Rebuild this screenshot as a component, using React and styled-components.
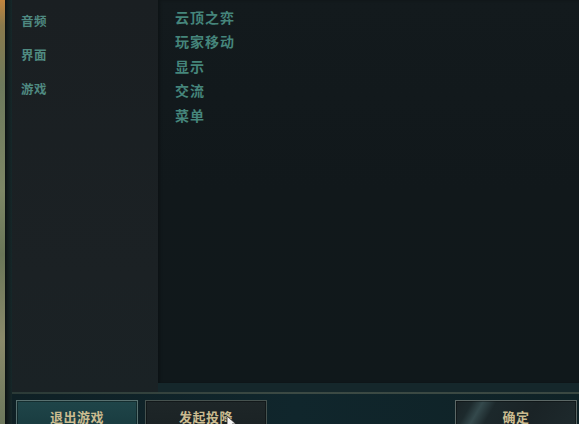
import React from "react";
import styled, { createGlobalStyle } from "styled-components";

const Global = createGlobalStyle`
  html, body { margin: 0; padding: 0; background: #0e1c1f; }
  body { width: 579px; height: 424px; overflow: hidden; font-family: "Noto Sans CJK SC", "Noto Sans", sans-serif; }
  #root { width: 579px; height: 424px; }
`;

const Frame = styled.div`
  position: relative;
  display: flex;
  width: 579px;
  height: 424px;
  overflow: hidden;
`;

const GameStrip = styled.div`
  width: 5px;
  flex: none;
  background: linear-gradient(180deg, #c2863e 0%, #8a7a4c 6%, #6d7a5c 20%, #7d8766 45%, #6a7658 60%, #8a8a6a 80%, #6d785c 100%);
`;

const Edge = styled.div`
  width: 7px;
  flex: none;
  background: linear-gradient(90deg, #0b1112 0%, #121c1d 40%, #16282a 100%);
`;

const Main = styled.div`
  flex: 1;
  display: flex;
  flex-direction: column;
  min-width: 0;
`;

const Content = styled.div`
  display: flex;
  height: 392px;
  flex: none;
  background: #15272b;
`;

const Sidebar = styled.nav`
  width: 146px;
  flex: none;
  display: flex;
  flex-direction: column;
  padding: 4px 0 0 9px;
  box-sizing: border-box;
  background: linear-gradient(180deg, #1a1f22 0%, #1b2124 70%, #1a2225 100%);
`;

const SideItem = styled.div`
  font-size: 12.5px;
  font-weight: 700;
  line-height: 34px;
  color: #4f8a81;
  letter-spacing: 0.4px;
`;

const PanelColumn = styled.div`
  flex: 1;
  display: flex;
  flex-direction: column;
  padding-bottom: 9px;
`;

const Panel = styled.section`
  flex: 1;
  display: flex;
  flex-direction: column;
  padding: 4.5px 0 0 17px;
  background: linear-gradient(180deg, #131a1d 0%, #11181b 50%, #10181b 100%);
  box-shadow: inset 2px 0 3px rgba(0, 0, 0, 0.25);
`;

const ListItem = styled.div`
  font-size: 14px;
  font-weight: 700;
  line-height: 24.5px;
  color: #45857b;
  letter-spacing: 1px;
`;

const Divider = styled.div`
  height: 2px;
  flex: none;
  background: linear-gradient(90deg, #2b3a37 0%, #3c4a44 50%, #3a4842 100%);
`;

const Footer = styled.footer`
  flex: 1;
  display: flex;
  align-items: flex-start;
  gap: 7px;
  padding: 6px 2px 0 4px;
  background: linear-gradient(90deg, #0f2025 0%, #10262c 50%, #0f2226 100%);
`;

const Spacer = styled.div`
  flex: 1;
`;

const Button = styled.button`
  width: 122px;
  height: 32px;
  flex: none;
  box-sizing: border-box;
  padding: 8px 0 0;
  display: flex;
  justify-content: center;
  align-items: flex-start;
  font-family: "Noto Sans CJK SC", sans-serif;
  font-size: 13px;
  font-weight: 700;
  line-height: 16px;
  letter-spacing: 0.5px;
  color: #cbbc90;
  cursor: pointer;
  border: 1px solid ${(p) => (p.$variant === "primary" ? "#587170" : p.$variant === "confirm" ? "#5c6866" : "#46524f")};
  box-shadow: inset 0 0 0 1px rgba(0, 0, 0, 0.35);
  background: ${(p) =>
    p.$variant === "primary"
      ? "linear-gradient(180deg, #1f4549 0%, #183a3e 100%)"
      : p.$variant === "confirm"
      ? "linear-gradient(120deg, #1a2326 0%, #1d2a2d 12%, #34494c 20%, #1c282b 30%, #1a2326 60%, #1e2a2d 100%)"
      : "linear-gradient(180deg, #1e2628 0%, #1a2224 100%)"};
`;

const Cursor = styled.svg`
  position: absolute;
  left: 226px;
  top: 415px;
  width: 11px;
  height: 16px;
`;

export default function App() {
  return (
    <>
      <Global />
      <Frame>
        <GameStrip />
        <Edge />
        <Main>
          <Content>
            <Sidebar>
              <SideItem>音频</SideItem>
              <SideItem>界面</SideItem>
              <SideItem>游戏</SideItem>
            </Sidebar>
            <PanelColumn>
              <Panel>
                <ListItem>云顶之弈</ListItem>
                <ListItem>玩家移动</ListItem>
                <ListItem>显示</ListItem>
                <ListItem>交流</ListItem>
                <ListItem>菜单</ListItem>
              </Panel>
            </PanelColumn>
          </Content>
          <Divider />
          <Footer>
            <Button $variant="primary">退出游戏</Button>
            <Button $variant="secondary">发起投降</Button>
            <Spacer />
            <Button $variant="confirm">确定</Button>
          </Footer>
        </Main>
        <Cursor viewBox="0 0 11 16">
          <path d="M1 1 L1 13 L4 10 L6.5 15 L8.5 14 L6 9 L10 9 Z" fill="#f2f2f2" stroke="#222" strokeWidth="0.8" />
        </Cursor>
      </Frame>
    </>
  );
}
